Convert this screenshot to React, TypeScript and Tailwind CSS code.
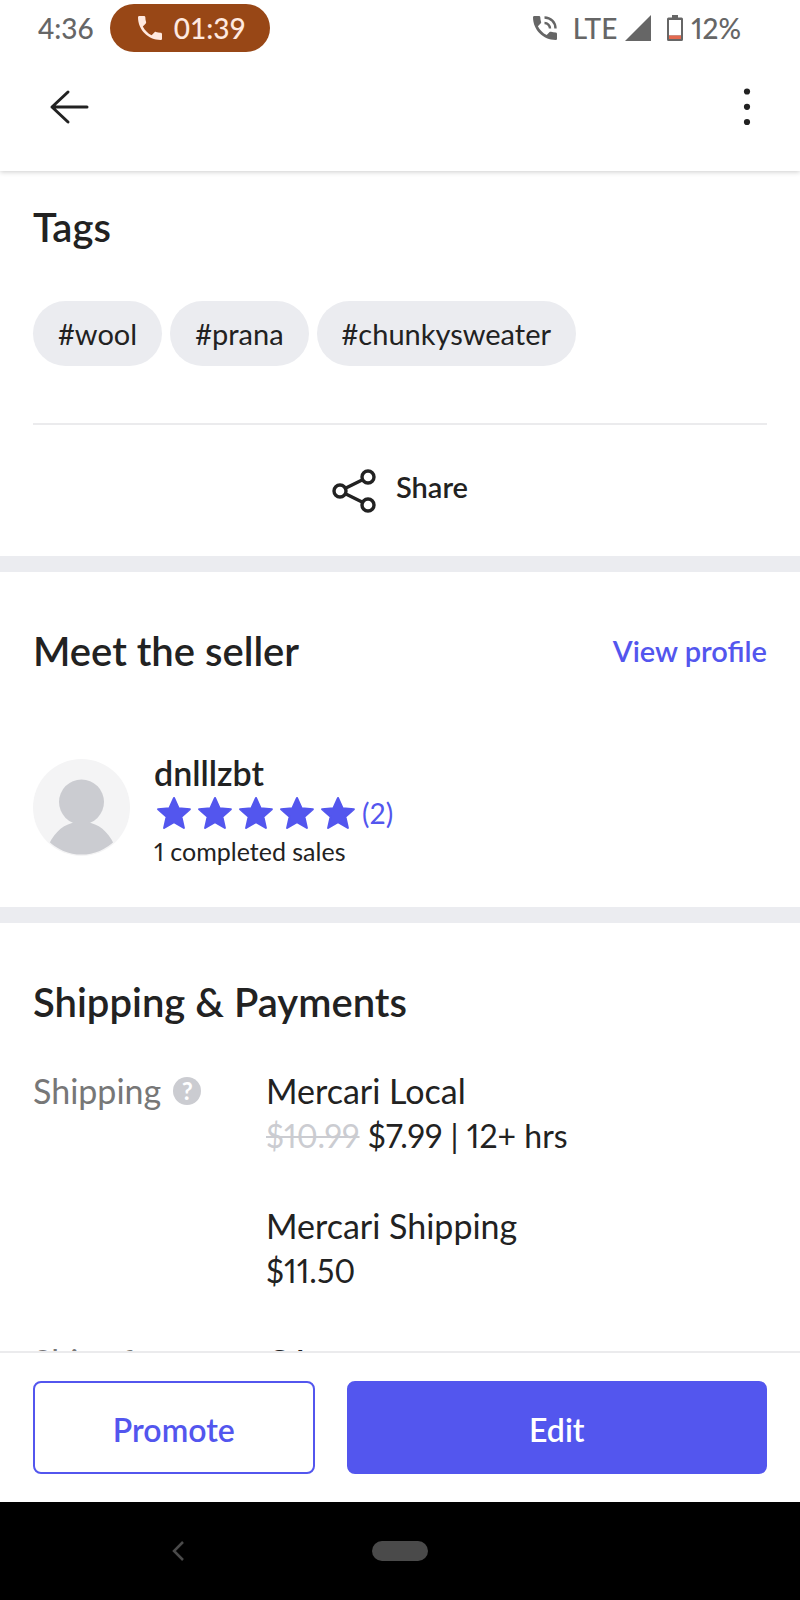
import { FC, ReactNode } from "react";
import { MdPhone } from "react-icons/md";

interface ShippingOption {
    name: string;
    price: string;
    oldPrice?: string;
    eta?: string;
}

const tags: string[] = ["#wool", "#prana", "#chunkysweater"];

const shippingOptions: ShippingOption[] = [
    { name: "Mercari Local", oldPrice: "$10.99", price: "$7.99", eta: "12+ hrs" },
    { name: "Mercari Shipping", price: "$11.50" },
];

const StatusBar: FC = () => (
    <div className="flex h-14 items-center justify-between pl-[38px] pr-[59px] text-[28px] leading-none font-medium text-[#666666]">
        <div className="flex items-center gap-4">
            <span>4:36</span>
            <span className="flex h-12 w-40 items-center justify-center gap-2 rounded-full bg-[#984716] text-[#ffe9e0]">
                <MdPhone className="size-8" />
                01:39
            </span>
        </div>
        <div className="flex items-center gap-2">
            <CallWavesIcon />
            <span className="ml-2">LTE</span>
            <svg className="size-[26px]" viewBox="0 0 26 26" fill="currentColor" aria-hidden="true">
                <path d="M26 0v26H0z" />
            </svg>
            <svg className="ml-2 h-[26px] w-4" viewBox="0 0 16 26" aria-hidden="true">
                <path d="M5 0h6v2.500h3.500a1.500 1.500 0 0 1 1.500 1.500v20.500a1.500 1.500 0 0 1-1.500 1.500h-13a1.500 1.500 0 0 1-1.500-1.500V4a1.500 1.500 0 0 1 1.500-1.500H5z" fill="#666666" />
                <path d="M2 5h12v15.500H2z" fill="#fff" />
                <path d="M2 20.500h12v3.500H2z" fill="#e4694f" />
            </svg>
            <span className="proportional-nums">12%</span>
        </div>
    </div>
);

const CallWavesIcon: FC = () => (
    <svg className="size-6" viewBox="0 0 24 24" fill="currentColor" aria-hidden="true">
        <path d="M22.700 16.600c-1.600 0-3.200-.3-4.700-.8-.5-.1-1 0-1.400.3l-2.900 2.900c-3.800-1.900-6.900-5-8.800-8.800l2.900-2.900c.4-.4.5-.9.3-1.400-.5-1.500-.8-3-.8-4.600C7.300.6 6.700 0 6 0H1.300C.6 0 0 .6 0 1.300 0 13.800 10.200 24 22.700 24c.7 0 1.300-.6 1.300-1.300v-4.800c0-.7-.6-1.300-1.300-1.300z" />
        <path d="M11.500 1.500c6.200 0 11 4.800 11 11M11.500 7c3 0 5.500 2.500 5.500 5.500" fill="none" stroke="currentColor" strokeWidth="2.400" />
    </svg>
);

const TopBar: FC = () => (
    <div className="flex h-[115px] items-start justify-between pt-6 pr-[26px] pl-[42px]">
        <button type="button" aria-label="Back" className="p-1">
            <svg className="size-[46px]" viewBox="0 0 46 46" fill="none" stroke="currentColor" strokeWidth="3" strokeLinecap="round" strokeLinejoin="round">
                <path d="M41 23H6M22 8 6 23l16 15" />
            </svg>
        </button>
        <button type="button" aria-label="More options" className="p-1">
            <svg className="size-[46px]" viewBox="0 0 46 46" fill="currentColor">
                <circle cx="23" cy="7.500" r="3.100" />
                <circle cx="23" cy="22.800" r="3.100" />
                <circle cx="23" cy="38" r="3.100" />
            </svg>
        </button>
    </div>
);

const Heading: FC<{ children: ReactNode }> = ({ children }) => (
    <h2 className="text-[40px] leading-[48px] font-semibold">{ children }</h2>
);

const Star: FC = () => (
    <svg className="size-[34px]" viewBox="0 0 34 34" fill="currentColor" stroke="currentColor" strokeWidth="2" strokeLinejoin="round" aria-hidden="true">
        <path d="m17 2 4.600 10.200 11.300 1-8.500 7.500 2.500 11.300L17 26.200 7.100 32l2.500-11.300-8.500-7.500 11.300-1z" />
    </svg>
);

const Avatar: FC = () => (
    <svg className="mt-1 size-[97px] shrink-0" viewBox="0 0 97 97" aria-hidden="true">
        <defs>
            <clipPath id="avatar-clip">
                <circle cx="48.500" cy="48" r="47.500" />
            </clipPath>
        </defs>
        <circle cx="48.500" cy="48.500" r="48.500" fill="#f4f4f5" />
        <g clipPath="url(#avatar-clip)" fill="#cbccd1">
            <circle cx="48.500" cy="43" r="22.500" />
            <path d="M14 90c5-14 14-23 25-26q3-1 3-3h13q0 2 3 3c11 3 20 12 25 26v10H14z" />
        </g>
    </svg>
);

const ShareIcon: FC = () => (
    <svg className="size-11" viewBox="0 0 44 44" fill="none" stroke="currentColor" strokeWidth="3.400" aria-hidden="true">
        <circle cx="8" cy="22" r="6" />
        <circle cx="36" cy="8" r="6" />
        <circle cx="36" cy="36" r="6" />
        <path d="m13.400 19.300 17.200-8.600M13.400 24.700l17.200 8.600" />
    </svg>
);

const HelpIcon: FC = () => (
    <span aria-hidden="true" className="flex size-7 items-center justify-center rounded-full bg-[#cbccd1] text-2xl leading-none font-bold text-white">?</span>
);

const App: FC = () => {
    return (
        <div className="flex h-screen flex-col bg-white font-['Lato','Liberation_Sans',sans-serif] text-[#222222]">
            <header className="relative z-10 shrink-0 bg-white shadow-[0_1px_5px_rgba(0,0,0,0.2)]">
                <StatusBar />
                <TopBar />
            </header>

            <main className="min-h-0 flex-1 overflow-hidden">
                {/* Tags */}
                <section className="px-[33px] pt-8">
                    <Heading>Tags</Heading>
                    <ul className="mt-[50px] flex flex-wrap gap-2">
                        {tags.map((tag) => (
                            <li key={ tag } className="flex h-[65px] items-center rounded-full bg-[#ebecf0] px-[25px] text-[29px] leading-9">
                                { tag }
                            </li>
                        ))}
                    </ul>
                    <button type="button" className="mt-[57px] flex h-[133px] w-full items-center justify-center gap-5 border-t-2 border-[#ebebed] text-[29px] font-semibold">
                        <ShareIcon />
                        <span className="pb-2">Share</span>
                    </button>
                </section>

                {/* Seller */}
                <section className="border-t-16 border-[#ebecf0] px-[33px] pt-[55px] pb-10">
                    <div className="flex items-center justify-between">
                        <Heading>Meet the seller</Heading>
                        <a href="#profile" className="text-[29px] leading-9 font-semibold text-[#5356ee]">View profile</a>
                    </div>
                    <div className="mt-20 flex items-start gap-6">
                        <Avatar />
                        <div>
                            <p className="text-[34px] leading-9 font-semibold">dnlllzbt</p>
                            <div className="flex h-11 items-center gap-[7px] pl-[3px] text-[#5356ee]">
                                {[1, 2, 3, 4, 5].map((star) => (
                                    <Star key={ star } />
                                ))}
                                <span className="text-[28px]">(2)</span>
                            </div>
                            <p className="text-[25px] leading-8 proportional-nums">1 completed sales</p>
                        </div>
                    </div>
                </section>

                {/* Shipping */}
                <section className="border-t-16 border-[#ebecf0] px-[33px] pt-[55px]">
                    <Heading>Shipping &amp; Payments</Heading>
                    <dl className="mt-[42px] grid grid-cols-[233px_1fr] gap-y-[46px] text-[34px] leading-[45px]">
                        <dt className="flex items-center gap-3 self-start text-[#777777]">
                            Shipping
                            <HelpIcon />
                        </dt>
                        <dd className="flex flex-col gap-[45px]">
                            {shippingOptions.map((option) => (
                                <div key={ option.name }>
                                    <p>{ option.name }</p>
                                    <p className="text-[32px] leading-[45px] proportional-nums">
                                        {option.oldPrice && <><s className="text-[#cbccd1] decoration-2">{ option.oldPrice }</s>{" "}</>}
                                        { option.price }
                                        {option.eta && ` | ${option.eta}`}
                                    </p>
                                </div>
                            ))}
                        </dd>
                        <dt className="text-[#777777]">Ships from</dt>
                        <dd>CA</dd>
                    </dl>
                </section>
            </main>

            <footer className="shrink-0">
                <div className="flex gap-8 border-t-2 border-[#ebebed] px-[33px] py-7 text-[32px] font-semibold">
                    <button type="button" className="h-[93px] flex-[2] rounded-lg border-2 border-[#5356ee] pt-1 text-[#5356ee]">Promote</button>
                    <button type="button" className="h-[93px] flex-[3] rounded-lg border-2 border-[#5356ee] bg-[#5356ee] pt-1 text-white">Edit</button>
                </div>
                <nav className="grid h-[98px] grid-cols-[1fr_auto_1fr] items-center bg-black">
                    <button type="button" aria-label="System back" className="mr-4 justify-self-center p-2 text-[#4a4a4a]">
                        <svg className="h-5 w-3" viewBox="0 0 12 20" fill="none" stroke="currentColor" strokeWidth="2.500">
                            <path d="M11 1 2 10l9 9" />
                        </svg>
                    </button>
                    <button type="button" aria-label="Home" className="h-5 w-14 rounded-full bg-[#4a4a4a]"></button>
                </nav>
            </footer>
        </div>
    )
}

export default App;
